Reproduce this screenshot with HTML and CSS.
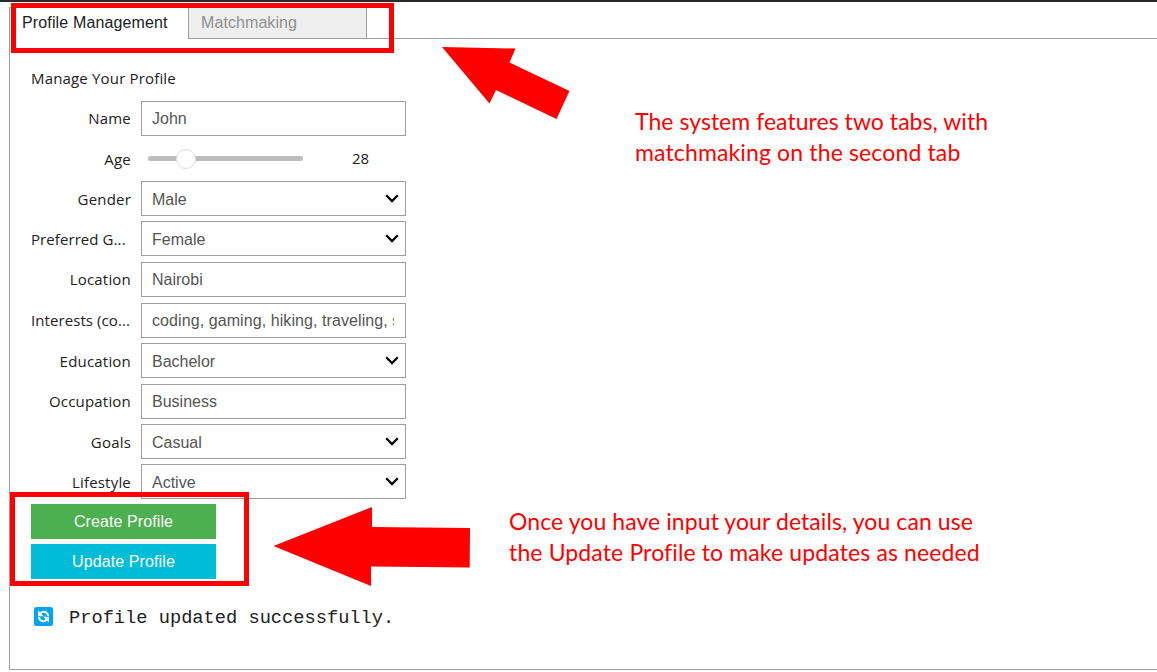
FILE: index.html
```html
<!DOCTYPE html>
<html lang="en">
<head>
<meta charset="utf-8">
<title>Profile Management</title>
<link rel="stylesheet" href="styles.css">
</head>
<body>
<div class="topbar"></div>
<main class="widget">
  <nav class="tabs">
    <div class="tab active"><span class="t-profile">Profile Management</span></div>
    <div class="tab idle"><span>Matchmaking</span></div>
    <div class="tab-rest"></div>
  </nav>
  <section class="panel">
    <h1 class="heading">Manage Your Profile</h1>
    <div class="form">
      <div class="row"><label class="label">Name</label><div class="field">John</div></div>
      <div class="row low"><label class="label">Age</label><div class="slider"><div class="track"><div class="thumb"></div></div><span class="readout">28</span></div></div>
      <div class="row low"><label class="label">Gender</label><div class="field">Male<svg class="chev" viewBox="0 0 14 9"><path d="M1.2 1.3 7 7.1l5.8-5.8"/></svg></div></div>
      <div class="row low"><label class="label cut">Preferred G...</label><div class="field">Female<svg class="chev" viewBox="0 0 14 9"><path d="M1.2 1.3 7 7.1l5.8-5.8"/></svg></div></div>
      <div class="row"><label class="label">Location</label><div class="field">Nairobi</div></div>
      <div class="row"><label class="label cut">Interests (co...</label><div class="field"><span class="clip">coding, gaming, hiking, traveling, sports</span></div></div>
      <div class="row low"><label class="label">Education</label><div class="field">Bachelor<svg class="chev" viewBox="0 0 14 9"><path d="M1.2 1.3 7 7.1l5.8-5.8"/></svg></div></div>
      <div class="row"><label class="label">Occupation</label><div class="field">Business</div></div>
      <div class="row low"><label class="label">Goals</label><div class="field">Casual<svg class="chev" viewBox="0 0 14 9"><path d="M1.2 1.3 7 7.1l5.8-5.8"/></svg></div></div>
      <div class="row low"><label class="label">Lifestyle</label><div class="field">Active<svg class="chev" viewBox="0 0 14 9"><path d="M1.2 1.3 7 7.1l5.8-5.8"/></svg></div></div>
      <div class="btn create">Create Profile</div>
      <div class="btn update">Update Profile</div>
    </div>
    <div class="status">
      <svg class="sync" viewBox="0 0 19 19"><rect width="19" height="19" rx="2.5" fill="#00a4ef"/><g fill="none" stroke="#fff" stroke-width="2"><path d="M6.3 6.2C8.5 4 13.8 4.2 14 9"/><path d="M12.7 12.8C10.5 15 5.2 14.8 5 10"/></g><path fill="#fff" d="M4 3.5v5.7h5.7zM15 15.5V9.8H9.3z"/></svg>
      <span class="message">Profile updated successfully.</span>
    </div>
  </section>
</main>
<div class="frame frame-tabs"></div>
<div class="frame frame-buttons"></div>
<svg class="arrows" viewBox="0 0 1157 672"><path d="M442 47 515.5 48.500 509.500 62.500 569.500 91 556.500 119 496 90 489.500 103.500z"/><path d="M273.500 546 372 507v20l98 1-.3 39.500-98.700-1V586z"/></svg>
<div class="note note-tabs"><div class="n1">The system features two tabs, with</div><div class="n2">matchmaking on the second tab</div></div>
<div class="note note-update"><div class="n3">Once you have input your details, you can use</div><div class="n4">the Update Profile to make updates as needed</div></div>
</body>
</html>
```
FILE: styles.css
```css
* { box-sizing: border-box; }
body {
  margin: 0;
  width: 1157px;
  height: 672px;
  overflow: hidden;
  position: relative;
  background: #fff;
  font-family: "Liberation Sans", sans-serif;
  font-size: 16px;
  color: #212121;
}
.topbar { height: 2px; background: #2a282a; }
.widget { padding: 5px 0 0 9px; }
.tabs { display: flex; height: 32px; }
.tab { white-space: nowrap; line-height: 30px; }
.active {
  width: 179px;
  padding-left: 13px;
  border-left: 1px solid #9e9e9e;
  border-top: 1px solid #64b5f6;
}
.idle {
  width: 179px;
  padding-left: 12px;
  border: 1px solid #9e9e9e;
  background: #eee;
  color: #909090;
  letter-spacing: .08px;
}
.t-profile { letter-spacing: .14px; margin-left: -1px; }
.tab-rest { flex: 1; border-bottom: 1px solid #9e9e9e; }
.panel {
  height: 631px;
  padding: 28px 0 0 21px;
  border-left: 1px solid #9e9e9e;
  border-bottom: 1px solid #9e9e9e;
}
.heading {
  margin: 0;
  height: 34px;
  font: 15px/22px "Open Sans", sans-serif;
  letter-spacing: .17px;
}
.form {
  display: grid;
  width: 375px;
  grid-template-rows: 40px 40px 40px 41px 41px 40px 41px 40px 40px 40px 40px 35px;
}
.row { display: flex; height: 35px; }
.label {
  width: 100px;
  margin-right: 10px;
  text-align: right;
  white-space: nowrap;
  font: 15px/35px "Open Sans", sans-serif;
  letter-spacing: .2px;
}
.cut { text-align: left; letter-spacing: .08px; }
.field {
  display: flex;
  align-items: center;
  justify-content: space-between;
  width: 265px;
  padding: 0 6px 0 10px;
  border: 1px solid #9e9e9e;
  color: #555;
}
.low .label, .low .readout { line-height: 37px; }
.low .field { line-height: 33px; align-items: flex-start; padding-top: 1px; }
.low .chev { margin-top: 11px; }
.clip { width: 242px; overflow: hidden; white-space: nowrap; letter-spacing: .08px; }
.chev { width: 14px; height: 9px; }
.chev path { fill: none; stroke: #000; stroke-width: 2.2; }
.slider { display: flex; align-items: center; padding-left: 7px; }
.track {
  display: flex;
  align-items: center;
  width: 155px;
  height: 5px;
  border-radius: 3px;
  background: #bdbdbd;
}
.thumb {
  width: 20px;
  height: 20px;
  flex: none;
  margin-left: 28px;
  border: 1px solid #ddd;
  border-radius: 50%;
  background: #fff;
}
.readout { margin-left: 49px; font: 15px/37px "Open Sans", sans-serif; }
.btn {
  width: 185px;
  height: 35px;
  line-height: 36px;
  text-align: center;
  letter-spacing: .1px;
  color: #fff;
}
.create { background: #4caf50; }
.update { background: #00bcd7; }
.status { display: flex; align-items: flex-start; height: 24px; margin: 28px 0 0 3px; }
.sync { width: 19px; height: 19px; }
.message {
  margin-left: 16px;
  font: 18.700px/22px "Liberation Mono", monospace;
  white-space: nowrap;
}
.frame { position: absolute; border: 5px solid #f00; }
.frame-tabs { left: 11px; top: 3px; width: 383px; height: 50px; }
.frame-buttons { left: 10px; top: 492px; width: 239px; height: 94px; }
.arrows { position: absolute; left: 0; top: 0; width: 1157px; height: 672px; fill: #f00; }
.note {
  position: absolute;
  font: 23px/31px Lato, sans-serif;
  white-space: nowrap;
  color: #f00;
}
.note-tabs { left: 635px; top: 106px; }
.note-update { left: 509px; top: 506px; }
.n1 { letter-spacing: .04px; }
.n2 { letter-spacing: .14px; }
.n3 { letter-spacing: .08px; }
.n4 { letter-spacing: .13px; }
```
